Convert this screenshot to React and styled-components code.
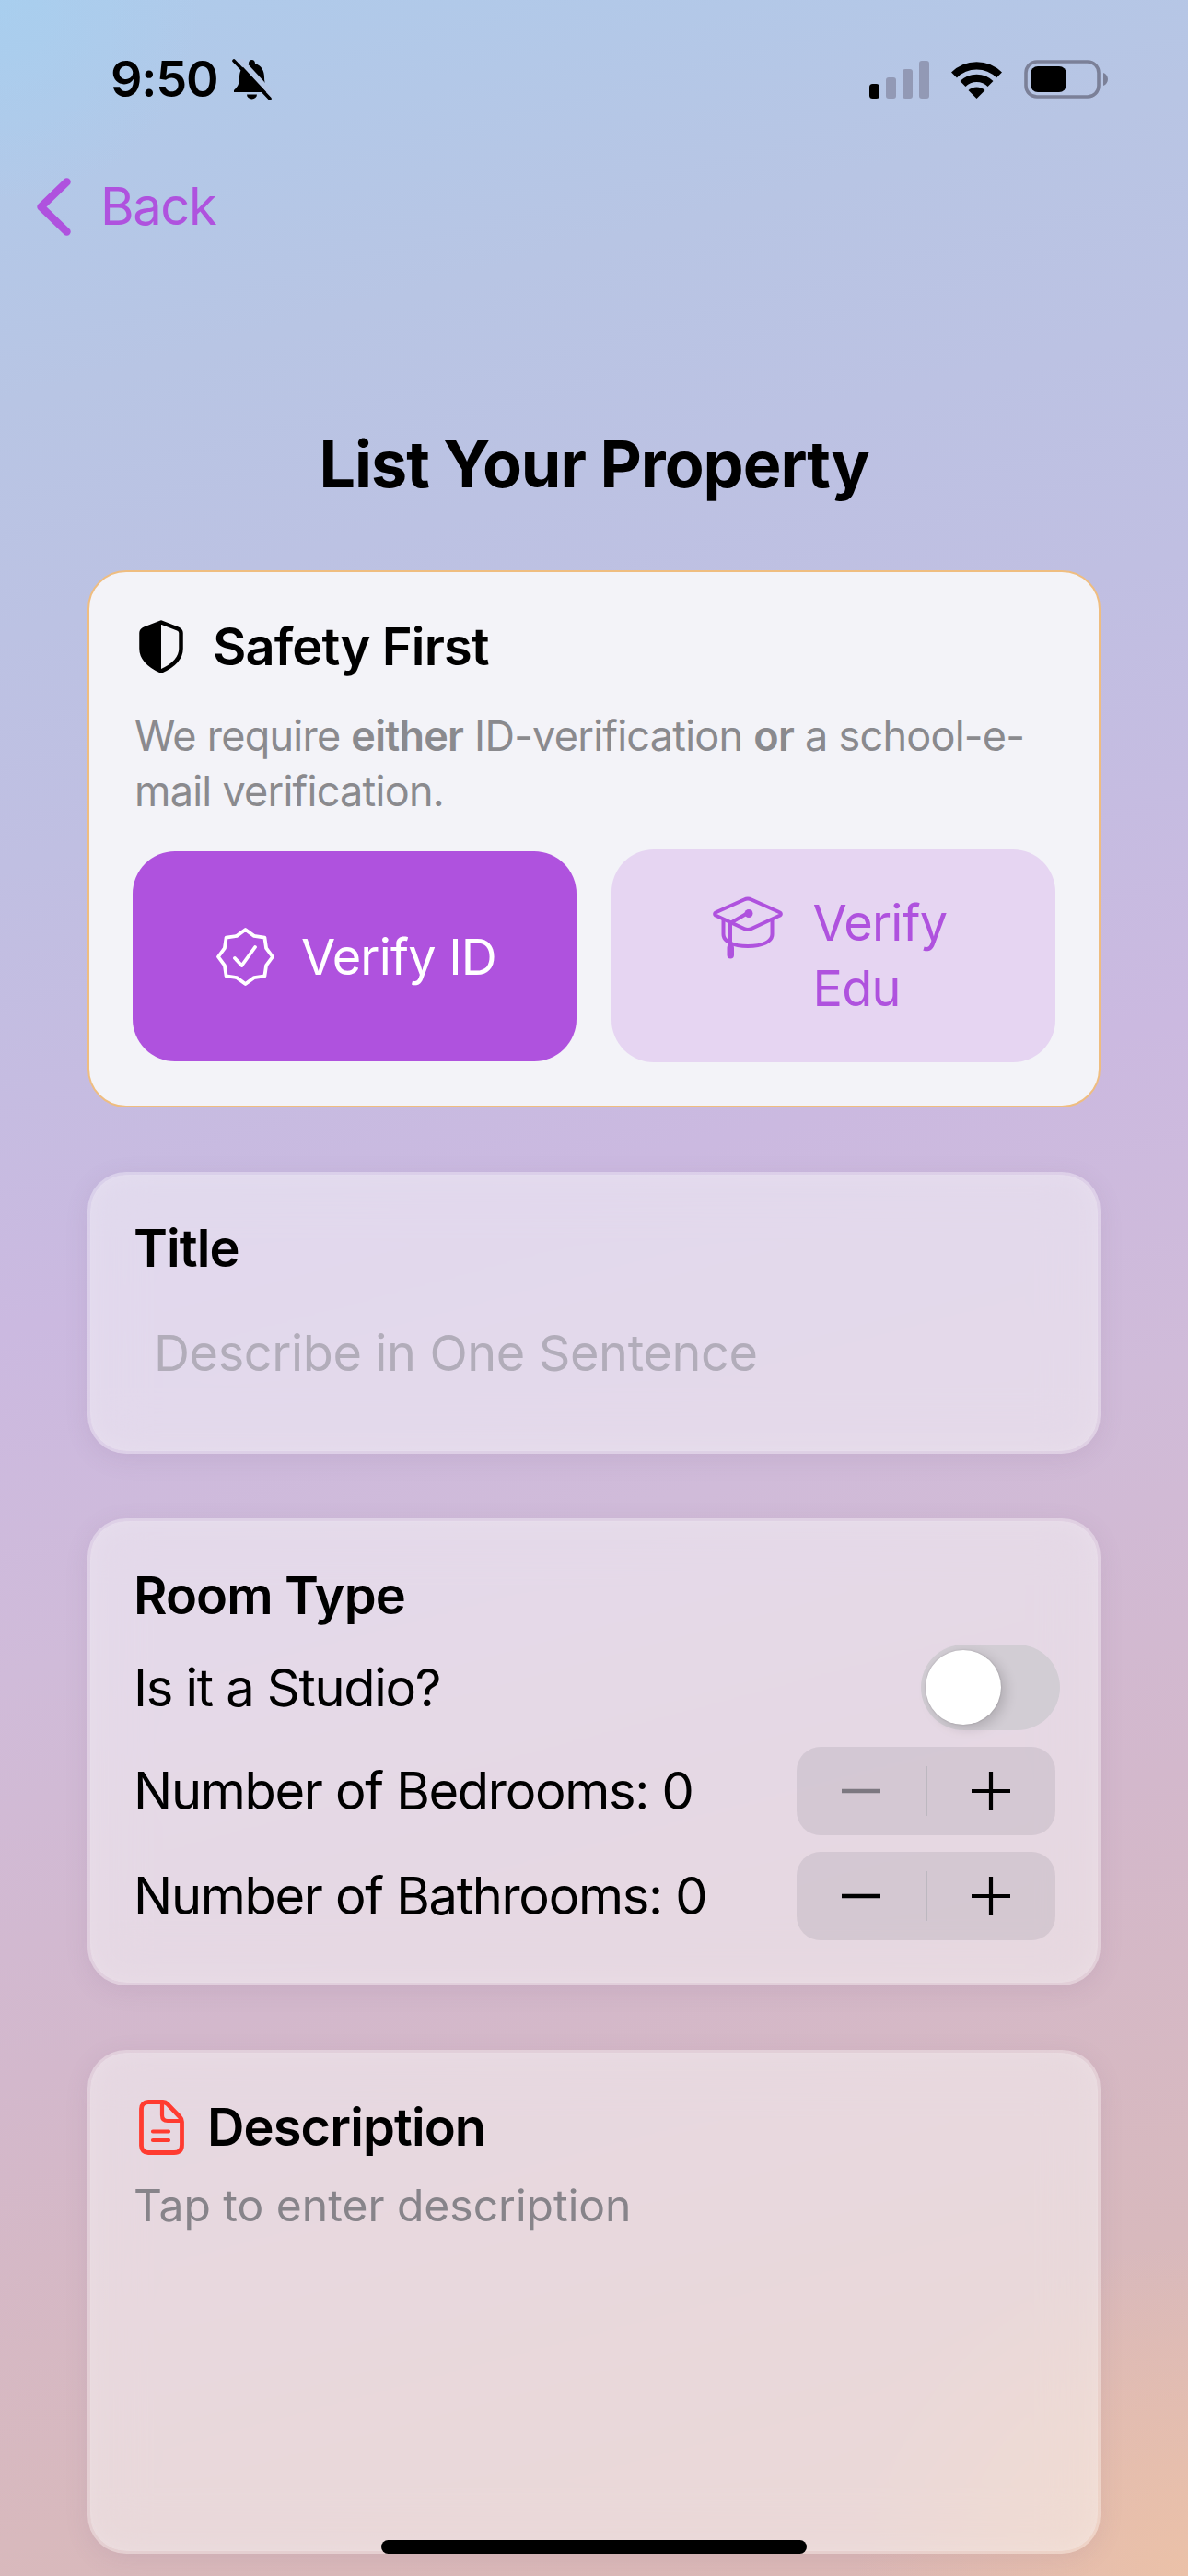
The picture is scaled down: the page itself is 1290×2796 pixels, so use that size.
import React from 'react';
import styled, { createGlobalStyle } from 'styled-components';

const PURPLE = '#af52de';
const BAR_GREY = '#9299b5';

const GlobalStyle = createGlobalStyle`
  html, body {
    margin: 0;
    padding: 0;
  }
  body {
    font-family: Inter, "Noto Sans", "Liberation Sans", sans-serif;
    color: #000;
  }
  * {
    box-sizing: border-box;
  }
`;

const Page = styled.div`
  position: relative;
  width: 1290px;
  height: 2796px;
  overflow: hidden;
  background:
    radial-gradient(circle at 0 0, rgba(166, 208, 240, 0.7) 0, rgba(166, 208, 240, 0) 220px),
    radial-gradient(circle at 100% 100%, rgba(235, 193, 168, 1) 0, rgba(235, 193, 168, 0) 360px),
    linear-gradient(165deg, #aecbeb 0%, #b8c5e4 14%, #c0bfe2 30%, #cbb9e0 46%, #d0bbd9 58%, #d3b8cc 72%, #d8b9bd 88%, #deb9b4 100%);
`;

const StatusBar = styled.div`
  display: flex;
  align-items: center;
  justify-content: space-between;
  height: 42px;
  margin-top: 65px;
  padding: 0 87px 0 120px;
`;

const StatusGroup = styled.div`
  display: flex;
  align-items: center;
  gap: ${({ $gap }) => $gap}px;
`;

const Time = styled.div`
  font-size: 54px;
  line-height: 42px;
  font-weight: 600;
  letter-spacing: -1.2px;
`;

const BackRow = styled.div`
  display: flex;
  align-items: center;
  gap: 32px;
  height: 63px;
  margin-top: 86px;
  padding-left: 40px;
  color: ${PURPLE};
`;

const BackLabel = styled.span`
  font-size: 56px;
  line-height: 63px;
  letter-spacing: -1.4px;
`;

const Heading = styled.h1`
  margin: 206px 0 73px;
  font-size: 70px;
  line-height: 84px;
  font-weight: 700;
  letter-spacing: -1px;
  text-align: center;
`;

const CardList = styled.div`
  display: flex;
  flex-direction: column;
  gap: 70px;
  padding: 0 95px;
`;

const SafetyCard = styled.section`
  padding: 52px 47px 47px;
  border: 2px solid #efbd80;
  border-radius: 42px;
  background: #f3f3f8;
`;

const GlassCard = styled.section`
  height: ${({ $height }) => $height}px;
  padding: ${({ $top }) => $top}px 46px 0 47px;
  border: 3px solid rgba(255, 255, 255, 0.32);
  border-radius: 42px;
  background: rgba(250, 250, 250, 0.48);
  background-clip: padding-box;
  backdrop-filter: blur(30px);
  box-shadow:
    0 6px 26px rgba(120, 90, 130, 0.12),
    inset 0 0 26px rgba(255, 255, 255, 0.14);
`;

const CardHead = styled.div`
  display: flex;
  align-items: center;
  gap: ${({ $gap }) => $gap}px;
  height: ${({ $height }) => $height}px;
  padding-left: ${({ $indent }) => $indent}px;
`;

const CardTitle = styled.h2`
  margin: 0;
  font-size: 56px;
  line-height: 68px;
  font-weight: 600;
  letter-spacing: -0.9px;
`;

const SafetyText = styled.p`
  margin: 38px 0 33px;
  padding-left: 2px;
  font-size: 45px;
  line-height: 60px;
  letter-spacing: -0.75px;
  color: #8a8a8e;

  b {
    font-weight: 600;
  }
`;

const VerifyRow = styled.div`
  display: grid;
  grid-template-columns: 482px 482px;
  justify-content: space-between;
  align-items: center;
`;

const VerifyButton = styled.div`
  display: flex;
  align-items: ${({ $filled }) => ($filled ? 'center' : 'flex-start')};
  justify-content: center;
  gap: ${({ $filled }) => ($filled ? 29 : 33)}px;
  height: ${({ $filled }) => ($filled ? 228 : 231)}px;
  padding: ${({ $filled }) => ($filled ? '2px 0 0 4px' : '44px 0 0')};
  border-radius: 46px;
  background: ${({ $filled }) => ($filled ? PURPLE : '#e6d5f2')};
  color: ${({ $filled }) => ($filled ? '#fff' : PURPLE)};
`;

const VerifyLabel = styled.span`
  max-width: ${({ $wrap }) => ($wrap ? '154px' : 'none')};
  font-size: 54px;
  line-height: 71px;
  letter-spacing: -0.8px;
`;

const EduIcon = styled.svg`
  flex: none;
  margin-top: 7px;
`;

const Placeholder = styled.div`
  margin-top: 46px;
  padding-left: 22px;
  font-size: 54px;
  line-height: 68px;
  letter-spacing: -0.38px;
  color: #b2adba;
`;

const RoomRows = styled.div`
  display: flex;
  flex-direction: column;
  gap: 18px;
  margin-top: 19px;
`;

const RoomRow = styled.div`
  display: flex;
  align-items: center;
  justify-content: space-between;
`;

const RowLabel = styled.span`
  font-size: 56px;
  letter-spacing: -1.3px;
`;

const Toggle = styled.div`
  display: flex;
  align-items: center;
  width: 151px;
  height: 93px;
  margin-right: -5px;
  padding: 0 5px;
  border-radius: 47px;
  background: #d2cdd4;
`;

const ToggleThumb = styled.div`
  width: 82px;
  height: 81px;
  border-radius: 50%;
  background: #fff;
  box-shadow: 5px 4px 14px rgba(0, 0, 0, 0.16), 0 0 2px rgba(0, 0, 0, 0.2);
`;

const Stepper = styled.div`
  display: flex;
  align-items: center;
  width: 281px;
  height: 96px;
  border-radius: 26px;
  background: rgba(118, 118, 128, 0.16);
`;

const StepperSide = styled.div`
  display: flex;
  flex: 1;
  align-items: center;
  justify-content: center;
  color: ${({ $muted }) => ($muted ? '#7c7880' : '#000')};
`;

const StepperDivider = styled.div`
  width: 2px;
  height: 54px;
  background: #bdb8c0;
`;

const TapHint = styled.div`
  margin-top: 25px;
  font-size: 48px;
  line-height: 60px;
  color: #87848a;
`;

const HomeIndicator = styled.div`
  position: absolute;
  left: 414px;
  top: 2757px;
  width: 462px;
  height: 15px;
  border-radius: 8px;
  background: #000;
`;

// 8 lobed badge, outer and inner radius alternate
const badgePoints = Array.from({ length: 16 }, (_, i) => {
  const radius = i % 2 === 0 ? 29.5 : 24.5;
  const angle = (i * Math.PI) / 8 - Math.PI / 2;
  return `${(31.5 + radius * Math.cos(angle)).toFixed(1)},${(31.5 + radius * Math.sin(angle)).toFixed(1)}`;
}).join(' ');

const BellOff = () => (
  <svg width="43" height="44" viewBox="0 0 43 44">
    <path
      d="M21.5 1C19 1 18 3 18 5C11 7 8 13 8 20C8 27 6 30 2 34V36H41V34C37 30 35 27 35 20C35 13 32 7 25 5C25 3 24 1 21.5 1Z"
      fill="#000"
    />
    <path d="M16 38.5a5.5 5 0 0 0 11 0Z" fill="#000" />
    <path d="M7 -1L45 40" stroke="#b5c7e6" strokeWidth="6" />
    <path d="M2 2L41 43" stroke="#000" strokeWidth="3.6" strokeLinecap="round" />
  </svg>
);

const Signal = () => (
  <svg width="65" height="41" viewBox="0 0 65 41">
    <rect x="0" y="25" width="11" height="16" rx="3.5" fill="#000" />
    <rect x="18" y="18" width="11" height="23" rx="3" fill={BAR_GREY} />
    <rect x="36" y="9" width="11" height="32" rx="3" fill={BAR_GREY} />
    <rect x="54" y="0" width="11" height="41" rx="3" fill={BAR_GREY} />
  </svg>
);

const Wifi = () => (
  <svg width="57" height="42" viewBox="0 0 57 42">
    <path d="M4 16.5C17.5 3 39.5 3 53 16.5" fill="none" stroke="#000" strokeWidth="8.4" />
    <path d="M13.5 26C21.8 17.8 35.2 17.8 43.5 26" fill="none" stroke="#000" strokeWidth="8.4" />
    <path d="M19.5 33C24.5 28.2 32.5 28.2 37.5 33L28.5 42Z" fill="#000" />
  </svg>
);

const Battery = () => (
  <svg width="91" height="42" viewBox="0 0 91 42">
    <rect x="2" y="2" width="79" height="38" rx="12" fill="none" stroke="#7b8098" strokeWidth="3.6" />
    <rect x="7" y="7" width="39" height="28" rx="8" fill="#000" />
    <path d="M86 14c3 1 5 4 5 7s-2 6-5 7Z" fill="#7b8098" />
  </svg>
);

const Chevron = () => (
  <svg width="37" height="63" viewBox="0 0 37 63">
    <path
      d="M32.5 4.5L4.5 31.5L32.5 58.5"
      fill="none"
      stroke={PURPLE}
      strokeWidth="8.5"
      strokeLinecap="round"
      strokeLinejoin="round"
    />
  </svg>
);

const Shield = () => (
  <svg width="48" height="58" viewBox="0 0 48 58">
    <path
      d="M24 2.5L42 9.5C44.5 10.5 45.5 12 45.5 14V31C45.5 42 36 50 24 55.5C12 50 2.5 42 2.5 31V14C2.5 12 3.5 10.5 6 9.5Z"
      fill="none"
      stroke="#000"
      strokeWidth="4.5"
      strokeLinejoin="round"
    />
    <path d="M24 2.5V55.5C12 50 2.5 42 2.5 31V14C2.5 12 3.5 10.5 6 9.5Z" fill="#000" />
  </svg>
);

const BadgeCheck = () => (
  <svg width="63" height="63" viewBox="0 0 63 63" style={{ flex: 'none' }}>
    <polygon points={badgePoints} fill="none" stroke="#fff" strokeWidth="3.8" strokeLinejoin="round" />
    <path
      d="M20 33L27.5 41L42 21"
      fill="none"
      stroke="#fff"
      strokeWidth="3.8"
      strokeLinecap="round"
      strokeLinejoin="round"
    />
  </svg>
);

const GradCap = () => (
  <EduIcon width="76" height="68" viewBox="0 0 76 68">
    <g fill="none" stroke={PURPLE} strokeWidth="4" strokeLinecap="round" strokeLinejoin="round">
      <path d="M34 3.5C36.5 2.3 39.5 2.3 42 3.5L72 17C74.5 18 74.5 20 72 21L42 35C39.5 36.2 36.5 36.2 34 35L4 21C1.5 20 1.5 18 4 17Z" />
      <path d="M11.5 25V41C11.5 49 22 54 38 54C54 54 64.5 49 64.5 41V25" />
      <path d="M37 18.5L19 29V56" />
    </g>
    <circle cx="39" cy="18.5" r="4.5" fill={PURPLE} />
    <rect x="15.5" y="52" width="7.5" height="15.5" rx="3.7" fill={PURPLE} />
  </EduIcon>
);

const DocIcon = () => (
  <svg width="49" height="60" viewBox="0 0 49 60">
    <g fill="none" stroke="#ff3b30" strokeLinecap="round" strokeLinejoin="round">
      <path
        d="M10 2.5H26C28 2.5 29.5 3.2 31 4.8L44 18.5C45.8 20.3 46.5 22 46.5 24V49C46.5 54.5 43.5 57.5 38 57.5H10C5.5 57.5 2.5 54.5 2.5 50V10C2.5 5.5 5.5 2.5 10 2.5Z"
        strokeWidth="4.8"
      />
      <path d="M25 3V17C25 21 27 23 31 23H45" strokeWidth="4.2" />
      <path d="M15 34.5H32M15 44H32" strokeWidth="4.2" />
    </g>
  </svg>
);

const MinusGlyph = () => (
  <svg width="42" height="42" viewBox="0 0 42 42">
    <path d="M1 21H41" stroke="currentColor" strokeWidth="4.6" strokeLinecap="round" />
  </svg>
);

const PlusGlyph = () => (
  <svg width="42" height="42" viewBox="0 0 42 42">
    <path d="M0 21H42M21 0V42" stroke="currentColor" strokeWidth="4.2" />
  </svg>
);

const CountStepper = ({ mutedMinus }) => (
  <Stepper>
    <StepperSide $muted={mutedMinus}>
      <MinusGlyph />
    </StepperSide>
    <StepperDivider />
    <StepperSide>
      <PlusGlyph />
    </StepperSide>
  </Stepper>
);

function App() {
  return (
    <Page>
      <GlobalStyle />
      <StatusBar>
        <StatusGroup $gap={15}>
          <Time>9:50</Time>
          <BellOff />
        </StatusGroup>
        <StatusGroup $gap={23}>
          <Signal />
          <Wifi />
          <Battery />
        </StatusGroup>
      </StatusBar>

      <BackRow>
        <Chevron />
        <BackLabel>Back</BackLabel>
      </BackRow>

      <Heading>List Your Property</Heading>

      <CardList>
        <SafetyCard>
          <CardHead $gap={32} $height={58} $indent={7}>
            <Shield />
            <CardTitle>Safety First</CardTitle>
          </CardHead>
          <SafetyText>
            We require <b>either</b> ID-verification <b>or</b> a school-e-mail verification.
          </SafetyText>
          <VerifyRow>
            <VerifyButton $filled>
              <BadgeCheck />
              <VerifyLabel>Verify ID</VerifyLabel>
            </VerifyButton>
            <VerifyButton>
              <GradCap />
              <VerifyLabel $wrap>Verify Edu</VerifyLabel>
            </VerifyButton>
          </VerifyRow>
        </SafetyCard>

        <GlassCard $height={306} $top={46}>
          <CardTitle>Title</CardTitle>
          <Placeholder>Describe in One Sentence</Placeholder>
        </GlassCard>

        <GlassCard $height={507} $top={47}>
          <CardTitle>Room Type</CardTitle>
          <RoomRows>
            <RoomRow>
              <RowLabel>Is it a Studio?</RowLabel>
              <Toggle>
                <ToggleThumb />
              </Toggle>
            </RoomRow>
            <RoomRow>
              <RowLabel>Number of Bedrooms: 0</RowLabel>
              <CountStepper mutedMinus />
            </RoomRow>
            <RoomRow>
              <RowLabel>Number of Bathrooms: 0</RowLabel>
              <CountStepper />
            </RoomRow>
          </RoomRows>
        </GlassCard>

        <GlassCard $height={547} $top={51}>
          <CardHead $gap={25} $height={60} $indent={6}>
            <DocIcon />
            <CardTitle>Description</CardTitle>
          </CardHead>
          <TapHint>Tap to enter description</TapHint>
        </GlassCard>
      </CardList>

      <HomeIndicator />
    </Page>
  );
}

export default App;
